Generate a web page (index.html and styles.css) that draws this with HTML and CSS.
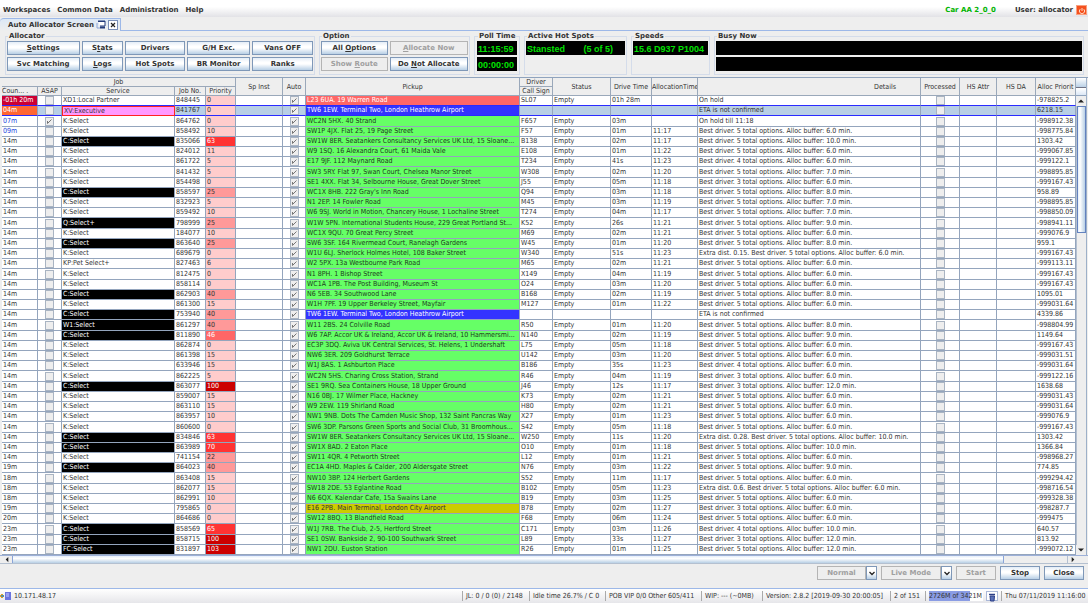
FILE: index.html
```html
<!DOCTYPE html>
<html lang="en">
<head>
<meta charset="utf-8">
<title>Auto Allocator Screen</title>
<link rel="stylesheet" href="styles.css">
</head>
<body>
<div class="app">
  <header class="menubar">
    <nav class="menus">
      <button class="menu">Workspaces</button>
      <button class="menu">Common Data</button>
      <button class="menu">Administration</button>
      <button class="menu">Help</button>
    </nav>
    <span class="build">Car AA 2_0_0</span>
    <span class="user">User: allocator</span>
    <button class="power" aria-label="Log out">
      <svg viewBox="0 0 10 10" width="10" height="10"><path d="M3.2 3.2a2.6 2.6 0 1 0 3.6 0M5 2v3" fill="none" stroke="#ffd9c4" stroke-width="1"/></svg>
    </button>
  </header>

  <div class="tabs">
    <div class="tab">
      <span>Auto Allocator Screen</span>
      <button class="tab-icon" aria-label="Detach">
        <svg viewBox="0 0 10 10" width="10" height="10"><path d="M2 1h7v5H4" fill="#fff" stroke="#223a7a"/><path d="M2 1.5h7" stroke="#223a7a" stroke-width="1"/><path d="M1 3v5h3" fill="none" stroke="#8aa4d8"/><path d="M4 7.500h5" stroke="#223a7a" stroke-width="2"/></svg>
      </button>
      <button class="tab-icon boxed" aria-label="Close tab">
        <svg viewBox="0 0 8 8" width="8" height="8"><path d="M2 2l4 4M6 2l-4 4" stroke="#222" stroke-width="1.200"/></svg>
      </button>
    </div>
  </div>

  <section class="toolbar">
    <fieldset class="group allocator">
      <legend>Allocator</legend>
      <div class="buttons">
        <button><u>S</u>ettings</button><button>S<u>t</u>ats</button><button>Drivers</button><button>G/H Exc.</button><button>Vans OFF</button>
        <button>Svc Matching</button><button><u>L</u>ogs</button><button>Hot Spots</button><button>BR Monitor</button><button>Ranks</button>
      </div>
    </fieldset>
    <fieldset class="group option">
      <legend>Option</legend>
      <div class="buttons">
        <button>All <u>O</u>ptions</button><button disabled><u>A</u>llocate Now</button>
        <button disabled>Show <u>R</u>oute</button><button>Do <u>N</u>ot Allocate</button>
      </div>
    </fieldset>
    <fieldset class="group poll">
      <legend>Poll Time</legend>
      <div class="lcd">11:15:59</div>
      <div class="lcd">00:00:00</div>
    </fieldset>
    <fieldset class="group spots">
      <legend>Active Hot Spots</legend>
      <div class="lcd split"><span>Stansted</span><span>(5 of 5)</span></div>
    </fieldset>
    <fieldset class="group speeds">
      <legend>Speeds</legend>
      <div class="lcd">15.6 D937 P1004</div>
    </fieldset>
    <fieldset class="group busy">
      <legend>Busy Now</legend>
      <div class="lcd"></div>
      <div class="lcd"></div>
    </fieldset>
  </section>

  <main class="grid">
    <div class="grid-body">
      <table class="jobs">
        <colgroup>
          <col class="w-count"><col class="w-asap"><col class="w-service"><col class="w-job"><col class="w-prio"><col class="w-inst"><col class="w-auto"><col class="w-pickup"><col class="w-call"><col class="w-status"><col class="w-drive"><col class="w-alloc"><col><col class="w-proc"><col class="w-attr"><col class="w-da"><col class="w-ap">
        </colgroup>
        <thead>
          <tr>
            <th colspan="5">Job</th><th rowspan="2">Sp Inst</th><th rowspan="2">Auto</th><th rowspan="2">Pickup</th><th>Driver</th><th rowspan="2">Status</th><th rowspan="2">Drive Time</th><th rowspan="2">AllocationTime</th><th rowspan="2" class="details-head">Details</th><th rowspan="2">Processed</th><th rowspan="2">HS Attr</th><th rowspan="2">HS DA</th><th rowspan="2">Alloc Priorit</th>
          </tr>
          <tr><th class="left">Coun... .</th><th>ASAP</th><th>Service</th><th>Job No.</th><th>Priority</th><th>Call Sign</th></tr>
        </thead>
        <tbody id="rows"></tbody>
      </table>
    </div>
    <div class="vbar">
      <button class="corner" aria-label="Columns"></button>
      <button class="arrow" aria-label="Scroll up"><svg viewBox="0 0 8 8" width="8" height="8"><path d="M1 5.500h6L4 2.500z" fill="#222"/></svg></button>
      <div class="vtrack"><div class="vthumb"></div></div>
      <button class="arrow" aria-label="Scroll down"><svg viewBox="0 0 8 8" width="8" height="8"><path d="M1 2.500h6L4 5.500z" fill="#222"/></svg></button>
    </div>
  </main>
  <div class="hbar">
    <button class="harrow" aria-label="Scroll left"><svg viewBox="0 0 8 8" width="8" height="8"><path d="M5.500 1v6l-3-3z" fill="#222"/></svg></button>
    <div class="htrack"><div class="hthumb"></div></div>
    <button class="harrow" aria-label="Scroll right"><svg viewBox="0 0 8 8" width="8" height="8"><path d="M2.500 1v6l3-3z" fill="#222"/></svg></button>
  </div>

  <section class="actions">
    <div class="combo mode">
      <select aria-label="Priority" disabled><option>Normal</option></select>
      <span class="drop"><svg viewBox="0 0 8 8" width="8" height="8"><path d="M1.500 3l2.500 2.500L6.500 3" fill="none" stroke="#222" stroke-width="1.300"/></svg></span>
    </div>
    <div class="combo live">
      <select aria-label="Mode" disabled><option>Live Mode</option></select>
      <span class="drop"><svg viewBox="0 0 8 8" width="8" height="8"><path d="M1.500 3l2.500 2.500L6.500 3" fill="none" stroke="#222" stroke-width="1.300"/></svg></span>
    </div>
    <button disabled>Start</button>
    <button>Stop</button>
    <button>Close</button>
  </section>

  <footer class="status">
    <div class="host">
      <svg viewBox="0 0 12 10" width="12" height="10"><path d="M0 5h4M2 3v4" stroke="#e0a020" stroke-width="2"/><path d="M1 5h3" stroke="#2a8ad0" stroke-width="1.500"/><rect x="5" y="1" width="6" height="8" fill="#6a74e0"/><path d="M6 3h3M6 5h3" stroke="#c8ccff"/></svg>
      <span>10.171.48.17</span>
    </div>
    <span class="cell jl">JL: 0 / 0 (0) / 2148</span>
    <span class="cell idle">Idle time 26.7% / C 0</span>
    <span class="cell pob">POB VIP 0/0 Other 605/411</span>
    <span class="cell wip">WIP: --- (~0MB)</span>
    <span class="cell version">Version: 2.8.2 [2019-09-30 20:00:05]</span>
    <span class="cell pages">2 of 151</span>
    <span class="cell memory"><span class="meter">2726M of 3421M</span>
      <button class="trash" aria-label="Collect garbage"><svg viewBox="0 0 10 10" width="10" height="10"><path d="M2 2.500h6" stroke="#2c3f86" stroke-width="1.500"/><path d="M3 4h4.500L7 9H3.500z" fill="#5a70b8" stroke="#2c3f86"/></svg></button>
    </span>
    <span class="cell clock">Thu 07/11/2019 11:16:00</span>
  </footer>
</div>
<script src="jobs.js"></script>
</body>
</html>
```
FILE: styles.css
```css
* { box-sizing: border-box; }
body {
  margin: 0;
  background: #fff;
  color: #333;
  font: 7px/9px "DejaVu Sans", Verdana, sans-serif;
}
.app { display: flex; flex-direction: column; background: #eee; }
button, select { font: inherit; color: inherit; margin: 0; padding: 0; border: 0; background: none; }
svg { display: block; }

.menubar {
  display: flex;
  align-items: center;
  height: 17px;
  padding: 3px 1px 0 3px;
  background: linear-gradient(#fff 40%, #e2e2e6);
  font-weight: bold;
}
.menus { display: flex; gap: 7px; flex: 1; }
.menu { line-height: 12px; }
.build { color: #00b400; margin-right: 19px; }
.user { margin-right: 3px; }
.power { background: #f4511e; border: 1px solid #f9a080; width: 11px; height: 10px; overflow: hidden; }

.tabs { height: 14px; border-bottom: 1px solid #9db8e8; padding-top: 1px; display: flex; }
.tab {
  display: flex;
  align-items: center;
  gap: 2px;
  height: 13px;
  padding: 0 2px 0 8px;
  border: 1px solid #9db8e8;
  border-width: 1px 1px 0 0;
  border-radius: 4px 0 0 0;
  background: linear-gradient(#dce8f6, #eee);
  font-weight: bold;
}
.tab-icon.boxed { border: 1px solid #7a8fb8; background: #fff; }

.toolbar { display: flex; gap: 4px; padding: 1px 4px 2px 5px; }
.group {
  min-width: 0;
  margin: 0;
  padding: 0 1px 2px;
  border: 1px solid #d4dcea;
  height: 43px;
}
.group legend { padding: 0 1px; margin-left: 1px; font-weight: bold; height: 9px; white-space: nowrap; }
.allocator { width: 310px; }
.option { width: 151px; }
.poll { width: 46px; padding: 0 2px; }
.spots { width: 103px; }
.speeds { width: 79px; }
.busy { flex: 1; }
.buttons { display: grid; gap: 2px; grid-auto-rows: 14px; }
.allocator .buttons { grid-template-columns: 73fr 42fr 60fr 64fr 61fr; }
.option .buttons { grid-template-columns: 67fr 79fr; }
.buttons button, .actions > button {
  border: 1px solid #7f98b8;
  background: linear-gradient(#e4edf7, #fff 35%, #fff 50%, #b8cfe5);
  font-weight: bold;
  line-height: 12px;
  white-space: nowrap;
}
.buttons button:disabled, .actions > button:disabled { border-color: #b4b4b4; background: #eee; color: #a0a0a0; }
.lcd {
  height: 14px;
  margin-bottom: 2px;
  padding: 0 1px;
  background: #000;
  color: #00e000;
  font: bold 9px/16px "Liberation Sans", Arial, sans-serif;
  white-space: nowrap;
  overflow: hidden;
}
.lcd.split { display: flex; justify-content: space-between; padding-right: 12px; }

.grid { display: flex; border-top: 1px solid #8fa3bd; padding: 0 1px 0 2px; }
.grid-body { flex: 1; min-width: 0; }
.jobs {
  width: 100%;
  table-layout: fixed;
  border-collapse: separate;
  border-spacing: 0;
  background: #fff;
  font-family: "DejaVu Sans Condensed", "DejaVu Sans", Tahoma, sans-serif;
}
.w-count { width: 36px; }
.w-asap { width: 24px; }
.w-service { width: 113px; }
.w-job { width: 31px; }
.w-prio { width: 30px; }
.w-inst { width: 47px; }
.w-auto { width: 23px; }
.w-pickup { width: 214px; }
.w-call { width: 33px; }
.w-status { width: 58px; }
.w-drive { width: 41px; }
.w-alloc { width: 46px; }
.w-proc { width: 39px; }
.w-attr { width: 37px; }
.w-da { width: 39px; }
.w-ap { width: 40px; }
.jobs th {
  height: 9px;
  padding: 0;
  border: 1px solid #9aa8ba;
  border-width: 0 1px 1px 0;
  background: #eee;
  font-weight: normal;
  line-height: 8px;
  white-space: nowrap;
  overflow: hidden;
}
.jobs th.left { text-align: left; }
.jobs th.details-head { padding-left: 152px; }
.jobs td {
  height: 10px;
  padding: 0 1px;
  border: 1px solid #94a5bd;
  border-width: 0 1px 1px 0;
  line-height: 9px;
  white-space: nowrap;
  overflow: hidden;
  text-overflow: ellipsis;
}
.jobs tbody tr:nth-child(5n + 3) td { height: 11px; }
.jobs .tick { text-align: center; padding: 0; text-overflow: clip; }
.tick input {
  appearance: none;
  display: block;
  width: 9px;
  height: 9px;
  margin: 0 auto;
  border: 1px solid #a9b4c2;
  background: #eee;
}
.tick input:checked {
  background: #eee url("data:image/svg+xml,%3Csvg xmlns='http://www.w3.org/2000/svg' viewBox='0 0 7 7'%3E%3Cpath d='M1.500 3v2.500L5.500 1.500' fill='none' stroke='%23777' stroke-width='1'/%3E%3C/svg%3E");
}
.late { background: #cc0033; color: #fff; }
.due { background: #ff6633; color: #fff; }
.soon { color: #2244dd; }
.dark { background: #000; color: #fff; }
.jobs .exec { background: #ff99ff; border: 1px solid #f22; line-height: 7px; }
.p0 { background: #ffcccc; }
.p1 { background: #ff9999; }
.p2 { background: #ff6666; color: #fff; }
.p3 { background: #ff3333; color: #fff; }
.p4 { background: #cc0000; color: #fff; }
.local { background: #66ff66; color: #1c3c1c; }
.away { background: #ff6666; color: #fff; }
.heathrow { background: #3333ff; color: #fff; }
.city { background: #cccc00; }
.selected { background: #b8cfe5; }
.jobs .before-selected td, .jobs .selected td:not(.exec) { border-bottom-color: #2a2aff; }

.vbar { width: 11px; display: flex; flex-direction: column; border-right: 1px solid #9db0c8; background: #eee; }
.vbar .corner { height: 18px; border-bottom: 1px solid #8fa3bd; background: linear-gradient(#fff, #b8cfe5 55%, #667 56%, #667 60%, #fff 61%, #dce8f6); }
.arrow { height: 10px; padding: 1px; background: #eee; }
.vtrack { flex: 1; border-left: 1px solid #b4c0d0; }
.vthumb { height: 29%; border: 1px solid #6382bf; background: linear-gradient(90deg, #e4eefa, #fff 30%, #b8cfe5); }
.hbar { display: flex; height: 9px; padding: 0 10px 0 2px; border-top: 1px solid #9db0d8; border-bottom: 1px solid #b4c0d0; }
.harrow { width: 10px; padding: 0 1px; line-height: 7px; }
.harrow svg { height: 7px; }
.htrack { flex: 1; border-right: 1px solid #b4c0d0; }
.hthumb { width: 94%; height: 7px; border: 1px solid #8aa4d8; border-width: 0 1px; background: linear-gradient(#e4eefa, #fff 35%, #b8cfe5); }

.actions { display: flex; justify-content: flex-end; gap: 4px; padding: 2px 4px 8px; border-bottom: 1px solid #9db8e8; }
.actions > button { width: 40px; height: 14px; }
.combo { display: flex; height: 14px; color: #a0a0a0; font-weight: bold; }
.combo select { appearance: none; flex: 1; min-width: 0; border: 1px solid #b4b4b4; text-align: center; text-align-last: center; opacity: 1; line-height: 12px; }
.drop { width: 11px; padding: 2px 1px; border: 1px solid #7f98b8; background: linear-gradient(#fff 50%, #b8cfe5); }
.mode { width: 60px; }
.live { width: 71px; }

.status {
  display: flex;
  align-items: center;
  height: 14px;
  background: linear-gradient(#fff, #e6e6ea);
  font-family: "DejaVu Sans Condensed", "DejaVu Sans", Tahoma, sans-serif;
  white-space: nowrap;
}
.host { flex: 1; display: flex; gap: 2px; align-items: center; }
.cell { height: 10px; padding-left: 3px; border-left: 1px solid #aaa; line-height: 10px; }
.jl { width: 67px; }
.idle { width: 76px; }
.pob { width: 96px; }
.wip { width: 61px; }
.version { width: 128px; }
.pages { width: 35px; }
.memory { width: 76px; display: flex; gap: 3px; }
.meter { width: 54px; background: linear-gradient(90deg, #8a9ce4 75%, #fff 75%); }
.clock { width: 87px; }
.trash { border: 1px solid #aab8d8; background: #fff; height: 10px; }
```
FILE: jobs.js
```js
// count | service | job | priority | pickup | call sign | drive | alloc time | plan or note | alloc priority
// A plan is options/buffer, with the extra distance as an optional third part.
const jobs = `-01h 20m|XD1:Local Partner|848445|0|L23 6UA. 19 Warren Road|SL07|01h 28m||On hold|-978825.2
04m|XV:Executive|841767|0|TW6 1EW. Terminal Two, London Heathrow Airport||||ETA is not confirmed|6218.15
07m|K:Select|864762|0|WC2N 5HX. 40 Strand|F657|03m||On hold till 11:18|-998912.38
09m|K:Select|858492|10|SW1P 4JX. Flat 25, 19 Page Street|F57|01m|11:17|5/6.0|-998775.84
14m|C:Select|835066|63|SW1W 8ER. Seatankers Consultancy Services UK Ltd, 15 Sloane...|B138|02m|11:17|5/10.0|1303.42
14m|K:Select|824012|11|W9 1SQ. 16 Alexandra Court, 61 Maida Vale|E108|01m|11:22|5/6.0|-999067.85
14m|K:Select|861722|5|E17 9JF. 112 Maynard Road|T234|41s|11:23|4/6.0|-999122.1
14m|K:Select|841432|5|SW3 5RY. Flat 97, Swan Court, Chelsea Manor Street|W308|02m|11:20|5/7.0|-998895.85
14m|K:Select|854498|0|SE1 4XX. Flat 34, Selbourne House, Great Dover Street|J55|05m|11:18|3/6.0|-999167.43
14m|C:Select|858597|25|WC1X 8HB. 222 Gray's Inn Road|Q94|03m|11:18|5/8.0|958.89
14m|K:Select|832923|5|N1 2EP. 14 Fowler Road|M45|03m|11:19|5/7.0|-998895.85
14m|K:Select|859492|10|W6 9SJ. World in Motion, Chancery House, 1 Lochaline Street|T274|04m|11:17|5/7.0|-998850.09
14m|Q:Select+|798999|25|W1W 5PN. International Students House, 229 Great Portland St...|K52|26s|11:21|5/9.0|-998941.11
14m|K:Select|184077|10|WC1X 9QU. 70 Great Percy Street|M69|02m|11:21|5/6.0|-999076.9
14m|C:Select|863640|25|SW6 3SF. 164 Rivermead Court, Ranelagh Gardens|W45|01m|11:20|5/8.0|959.1
14m|K:Select|689679|0|W1U 6LJ. Sherlock Holmes Hotel, 108 Baker Street|W340|51s|11:23|5/6.0/0.15|-999167.43
14m|KP:Pet Select+|827463|6|W2 5PX. 13a Westbourne Park Road|M65|02m|11:21|5/6.0|-999113.11
14m|K:Select|812475|0|N1 8PH. 1 Bishop Street|X149|04m|11:19|5/6.0|-999167.43
14m|K:Select|858114|0|WC1A 1PB. The Post Building, Museum St|O24|03m|11:20|5/6.0|-999167.43
14m|C:Select|862903|40|N6 5EB. 34 Southwood Lane|B168|02m|11:19|5/8.0|1095.01
14m|K:Select|861300|15|W1H 7PF. 19 Upper Berkeley Street, Mayfair|M127|01m|11:22|5/6.0|-999031.64
14m|C:Select|753940|40|TW6 1EW. Terminal Two, London Heathrow Airport||||ETA is not confirmed|4339.86
14m|W1:Select|861297|40|W11 2BS. 24 Colville Road|R50|01m|11:20|5/8.0|-998804.99
14m|C:Select|811890|46|W6 7AP. Accor UK & Ireland, Accor UK & Ireland, 10 Hammersmi...|N140|02m|11:19|5/9.0|1149.64
14m|K:Select|862874|0|EC3P 3DQ. Aviva UK Central Services, St. Helens, 1 Undershaft|L75|05m|11:18|5/6.0|-999167.43
14m|K:Select|861398|15|NW6 3ER. 209 Goldhurst Terrace|U142|03m|11:20|5/6.0|-999031.51
14m|K:Select|633946|15|W1J 8AS. 1 Ashburton Place|B186|35s|11:23|4/6.0|-999031.64
14m|K:Select|862225|5|WC2N 5HS. Charing Cross Station, Strand|R46|04m|11:19|3/6.0|-999122.16
14m|C:Select|863077|100|SE1 9RQ. Sea Containers House, 18 Upper Ground|J46|12s|11:17|3/12.0|1638.68
14m|K:Select|859007|15|N16 0BJ. 17 Wilmer Place, Hackney|K73|02m|11:21|5/6.0|-999031.43
14m|K:Select|863110|15|W9 2EW. 119 Shirland Road|H80|02m|11:21|5/6.0|-999031.64
14m|K:Select|863957|10|NW1 9NB. Dots The Camden Music Shop, 132 Saint Pancras Way|X27|01m|11:23|5/6.0|-999076.9
14m|K:Select|860600|0|SW6 3DP. Parsons Green Sports and Social Club, 31 Broomhous...|S42|05m|11:18|5/6.0|-999167.43
14m|C:Select|834846|63|SW1W 8ER. Seatankers Consultancy Services UK Ltd, 15 Sloane...|W250|11s|11:20|5/10.0/0.28|1303.42
14m|C:Select|863989|70|SW1X 8AD. 2 Eaton Place|O10|01m|11:18|5/10.0|1366.84
14m|K:Select|741154|22|SW11 4QR. 4 Petworth Street|L12|01m|11:21|5/6.0|-998968.27
19m|C:Select|864023|40|EC1A 4HD. Maples & Calder, 200 Aldersgate Street|N76|03m|11:22|5/9.0|774.85
18m|K:Select|863408|15|NW10 3BP. 124 Herbert Gardens|S52|11m|11:17|5/6.0|-999294.42
18m|K:Select|862077|15|SW18 2DE. 53 Eglantine Road|B102|05m|11:23|5/6.0/0.6|-998716.54
18m|K:Select|862991|10|N6 6QX. Kalendar Cafe, 15a Swains Lane|B19|03m|11:25|5/6.0|-999328.38
19m|K:Select|795865|0|E16 2PB. Main Terminal, London City Airport|B78|02m|11:27|3/6.0|-998287.7
20m|K:Select|864686|0|SW12 8BQ. 13 Blandfield Road|F68|06m|11:24|5/6.0|-999475
23m|C:Select|858569|65|W1J 7RB. The Club, 2-5, Hertford Street|C171|03m|11:26|4/10.0|640.57
23m|C:Select|858715|100|SE1 0SW. Bankside 2, 90-100 Southwark Street|L89|33s|11:27|3/12.0|813.92
23m|FC:Select|831897|103|NW1 2DU. Euston Station|R26|01m|11:25|5/12.0|-999072.12`
  .split("\n").map(line => line.split("|"));

const describe = plan => {
  const [options, buffer, extra] = plan.split("/");
  if (!buffer) return plan;
  return `${extra ? `Extra dist. ${extra}. ` : ""}Best driver. ${options} total options. Alloc buffer: ${buffer} min.`;
};
const countClass = ["late", "due", "soon", "soon"];
const serviceClass = s => s.includes("Executive") ? "exec" : /^(C|Q|W1|FC):/.test(s) ? "dark" : "";
const prioClass = p => p >= 100 ? "p4" : p >= 60 ? "p3" : p >= 46 ? "p2" : p >= 20 ? "p1" : "p0";
const pickupClass = p => p.includes("Heathrow") ? "heathrow" : p.includes("City Airport") ? "city" : p.startsWith("L23") ? "away" : "local";

const body = document.getElementById("rows");
jobs.forEach(([count, service, job, prio, pickup, call, drive, time, plan, rank], i) => {
  const tr = body.insertRow();
  tr.className = ["before-selected", "selected"][i] || "";
  const text = (value, cls = "") => {
    const td = tr.insertCell();
    td.textContent = value;
    td.className = cls;
  };
  const tick = (label, checked) => {
    const td = tr.insertCell();
    td.className = "tick";
    const box = document.createElement("input");
    box.type = "checkbox";
    box.checked = checked;
    box.setAttribute("aria-label", `${label} ${job}`);
    td.append(box);
  };
  text(count, countClass[i] || "");
  tick("ASAP", i === 2);
  text(service, serviceClass(service));
  text(job);
  text(prio, prioClass(+prio));
  text("");
  tick("Auto", true);
  text(pickup, pickupClass(pickup));
  text(call);
  text(call ? "Empty" : "");
  text(drive);
  text(time);
  text(describe(plan));
  tick("Processed", false);
  text("");
  text("");
  text(rank);
});
```
